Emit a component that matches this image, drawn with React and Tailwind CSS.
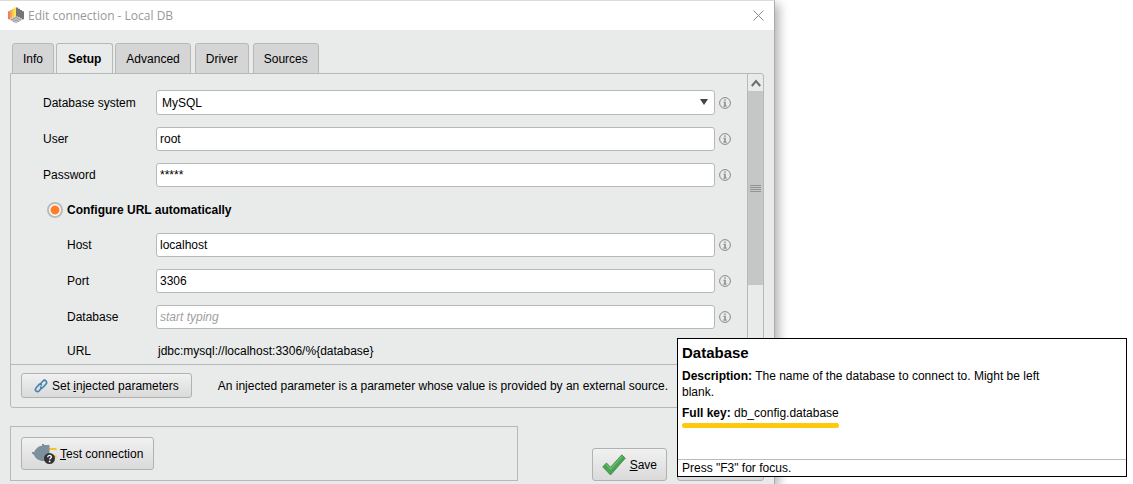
import { useState } from "react";

const tabs = ["Info", "Setup", "Advanced", "Driver", "Sources"];

function LogoIcon() {
  return (
    <svg viewBox="0 0 16 17" className="h-[17px] w-4" fill="none" strokeWidth="1.500">
      <path d="M1 12.300 8 9l7 3.300-7 4.200z" fill="#c3c5c6" />
      <path d="M3 13.200 8 10.700l5 2.500M5 14.600l3-1.500 3 1.500" stroke="#8b8e90" strokeWidth=".8" />
      <path d="M1 4.200v8" stroke="#e8541e" />
      <path d="M3 3v8.300" stroke="#f5861d" />
      <path d="M5 1.800v8.500" stroke="#fbb51c" />
      <path d="M7 .5v8.900" stroke="#f7dc1e" />
      <path d="M9 .5v8.900M11 1.800v8.500M13 3v8.300M15 4.200v8" stroke="#45484b" />
    </svg>
  );
}

function InfoIcon() {
  return (
    <svg viewBox="0 0 12 12" className="size-3 shrink-0" fill="none" stroke="#868988">
      <circle cx="6" cy="6" r="5.400" />
      <path d="M4.400 5.300h1.200M4.200 9.100h3.600" />
      <path d="M6 4.800v4.500M6 2.400v1.400" strokeWidth="1.500" />
    </svg>
  );
}

function LinkIcon() {
  return (
    <svg viewBox="0 0 14 14" className="size-3.5" fill="none" stroke="#4484ad" strokeWidth="1.700" strokeLinecap="round">
      <path d="M6.200 5.200 9 2a2.100 2.100 0 0 1 3 3L9.400 8a2 2 0 0 1-2.800.1" />
      <path d="M7.800 8.800 5 12a2.100 2.100 0 0 1-3-3l2.600-3a2 2 0 0 1 2.800-.1" />
    </svg>
  );
}

function PlugIcon() {
  return (
    <svg viewBox="0 0 26 20" className="h-5 w-[26px]">
      <path d="M17 5h7.500M17 12.500h7.500" stroke="#f4c430" strokeWidth="2.200" />
      <path d="M0 8h2C3.500 4.500 6.500 2 10 1.700V0h2v1h5.500v16H11C7 17 3.500 14.500 2 11L0 9.500z" fill="#7c919c" />
      <circle cx="17.500" cy="14.500" r="5.500" fill="#333" />
      <path d="M15.700 13.200c0-2.400 3.600-2.300 3.600-.2 0 1.300-1.700 1.300-1.700 2.600" fill="none" stroke="#fff" strokeWidth="1.400" />
      <circle cx="17.600" cy="17.400" r=".9" fill="#fff" />
    </svg>
  );
}

function CheckIcon() {
  return (
    <svg viewBox="0 0 24 22" className="h-[22px] w-6">
      <path d="M.7 12.800 4.500 9l4 4.200L19.800.8l3.500 3.400L8.500 21z" fill="#4aa552" stroke="#3a8b43" strokeWidth=".8" />
      <path d="M4.300 10.700l4.200 4.300L20 2.400" fill="none" stroke="#74bd79" strokeWidth="1.200" />
    </svg>
  );
}

// label + text box + info marker
function Field({ id, label, indent, value, onChange, placeholder }) {
  return (
    <div className="flex items-center">
      <label htmlFor={id} className={`w-[113px] shrink-0 ${indent ? "pl-6" : ""}`}>
        {label}
      </label>
      <input
        id={id}
        name={id}
        value={value}
        onChange={onChange}
        placeholder={placeholder}
        autoComplete="off"
        className="mr-1 h-6 min-w-0 flex-1 rounded-[3px] border border-[#b6b9b8] bg-white px-[3px] placeholder:text-[#a0a0a0] placeholder:italic"
      />
      <InfoIcon />
    </div>
  );
}

const buttonStyle =
  "flex items-center rounded-[3px] border border-[#b0b2b1] bg-linear-to-b from-[#f1f1f1] to-[#dadada]";

export default function App() {
  const [form, setForm] = useState({
    system: "MySQL",
    user: "root",
    password: "*****",
    host: "localhost",
    port: "3306",
    database: "",
  });
  const [tab, setTab] = useState("Setup");
  const [auto, setAuto] = useState(true);

  const update = (e) => setForm((prev) => ({ ...prev, [e.target.name]: e.target.value }));

  return (
    <div className="relative min-h-screen overflow-hidden bg-white font-['Liberation_Sans',Arial,sans-serif] text-[12px] leading-4 text-black">
      {/* Dialog */}
      <div className="flex min-h-screen w-full max-w-[775px] flex-col border-t border-r border-t-[#dcdcdc] border-r-[#a9acab] bg-[#e8ebea] shadow-[4px_4px_10px_rgba(0,0,0,0.3)]">
        {/* Title bar */}
        <header className="flex h-[29px] items-center bg-white pr-2.5 pl-2">
          <LogoIcon />
          <h1 className="ml-1 flex-1 font-['Open_Sans',sans-serif] text-[12px] text-[#999]">
            Edit connection - Local DB
          </h1>
          <button type="button" aria-label="Close">
            <svg viewBox="0 0 11 11" className="size-[11px]" stroke="#8a8a8a">
              <path d="M.5.5l10 10M10.500.5l-10 10" />
            </svg>
          </button>
        </header>

        <main className="flex flex-1 flex-col px-2.5 pt-[13px]">
          {/* Tabs */}
          <div role="tablist" className="-mb-px flex pl-0.5">
            {tabs.map((t) => (
              <button
                key={t}
                type="button"
                role="tab"
                aria-selected={tab === t}
                onClick={() => setTab(t)}
                className={`h-[31px] rounded-t-[3px] border border-[#b6b9b8] ${
                  tab === t
                    ? "mr-0.5 -ml-0.5 border-b-[#e8ebea] bg-[#e8ebea] px-[11px] font-bold"
                    : "mr-1 bg-[#d5d5d5] px-2.5"
                }`}
              >
                {t}
              </button>
            ))}
          </div>

          {/* Setup panel */}
          <section className="rounded-[3px] rounded-tl-none border border-[#b6b9b8]">
            <div className="flex border-b border-[#b6b9b8]">
              <form className="flex min-w-0 flex-1 flex-col gap-3 pt-4 pr-4 pb-[3px] pl-8">
                <div className="flex items-center">
                  <label htmlFor="system" className="w-[113px] shrink-0">
                    Database system
                  </label>
                  <div className="relative mr-1 flex min-w-0 flex-1">
                    <select
                      id="system"
                      name="system"
                      value={form.system}
                      onChange={update}
                      className="h-[25px] w-full appearance-none rounded-[3px] border border-[#b6b9b8] bg-white px-[5px]"
                    >
                      <option>MySQL</option>
                      <option>PostgreSQL</option>
                    </select>
                    <svg viewBox="0 0 8 6" className="pointer-events-none absolute top-[9px] right-[7px] h-1.5 w-2" fill="#444">
                      <path d="M0 0h8L4 6z" />
                    </svg>
                  </div>
                  <InfoIcon />
                </div>
                <Field id="user" label="User" value={form.user} onChange={update} />
                <Field id="password" label="Password" value={form.password} onChange={update} />

                <label className="flex h-[22px] items-center gap-1 pl-1 font-bold">
                  <input
                    type="radio"
                    name="mode"
                    checked={auto}
                    onChange={() => setAuto(true)}
                    className="size-4 appearance-none rounded-full border-2 border-[#b9bcbb] bg-white checked:bg-[radial-gradient(circle,#ff7f27_4px,#fff_5px)]"
                  />
                  Configure URL automatically
                </label>

                <Field id="host" label="Host" indent value={form.host} onChange={update} />
                <Field id="port" label="Port" indent value={form.port} onChange={update} />
                <Field id="database" label="Database" indent placeholder="start typing" value={form.database} onChange={update} />
                <div className="flex h-5 items-center">
                  <span className="w-[113px] shrink-0 pl-6">URL</span>
                  <span className="pl-0.5">
                    jdbc:mysql://{form.host}:{form.port}/%{"{database}"}
                  </span>
                </div>
              </form>

              {/* Scroll bar */}
              <div className="flex w-4 flex-col border-l border-[#b6b9b8]">
                <div className="flex h-[17px] items-center justify-center">
                  <svg viewBox="0 0 10 8" className="h-2 w-2.5" fill="none" stroke="#6a6d6c" strokeWidth="2">
                    <path d="M.8 7 5 2l4.200 5" />
                  </svg>
                </div>
                <div className="flex flex-[194] flex-col items-center justify-center gap-px bg-[#c5c7c6]">
                  <i className="h-px w-[11px] bg-[#929594]" />
                  <i className="h-px w-[11px] bg-[#929594]" />
                  <i className="h-px w-[11px] bg-[#929594]" />
                  <i className="h-px w-[11px] bg-[#929594]" />
                </div>
                <div className="flex-[79]" />
              </div>
            </div>

            <div className="flex items-center gap-[26px] px-2.5 pt-2 pb-[9px]">
              <button type="button" className={`${buttonStyle} h-[25px] shrink-0 gap-1 px-3`}>
                <LinkIcon />
                <span>
                  Set <u>i</u>njected parameters
                </span>
              </button>
              <p>An injected parameter is a parameter whose value is provided by an external source.</p>
            </div>
          </section>

          {/* Footer buttons */}
          <footer className="mt-[18px] flex items-end gap-2.5">
            <div className="w-[508px] border border-[#b6b9b8] p-2.5">
              <button type="button" className={`${buttonStyle} h-[33px] gap-0.5 px-2.5`}>
                <PlugIcon />
                <span>
                  <u>T</u>est connection
                </span>
              </button>
            </div>
            <button type="button" className={`${buttonStyle} ml-auto h-[33px] gap-1 px-[9px]`}>
              <CheckIcon />
              <span>
                <u>S</u>ave
              </span>
            </button>
            <button type="button" aria-label="Cancel" className={`${buttonStyle} h-[33px] w-[87px]`} />
          </footer>
        </main>
      </div>

      {/* Tooltip */}
      <aside role="tooltip" className="absolute top-[338px] left-[677px] flex h-[139px] w-[450px] flex-col border border-black bg-white">
        <div className="flex-1 px-1 pt-1.5">
          <h2 className="text-[15px] leading-4 font-bold">Database</h2>
          <p className="mt-[7px] max-w-[380px]">
            <b>Description:</b> The name of the database to connect to. Might be left blank.
          </p>
          <p className="mt-[5px] w-fit">
            <b>Full key:</b> db_config.database
            <span className="mt-0.5 block h-[5px] rounded-full bg-[#ffc90e]" />
          </p>
        </div>
        <p className="border-t border-[#bbb] px-1">Press "F3" for focus.</p>
      </aside>
    </div>
  );
}
